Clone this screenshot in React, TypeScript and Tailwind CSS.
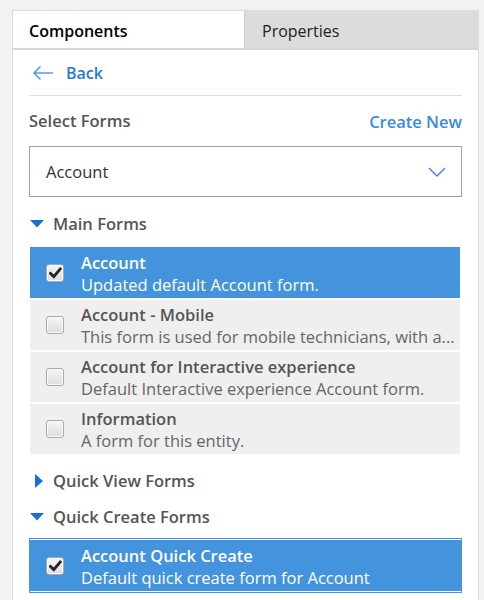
import React from "react";

const font = { fontFamily: '"Open Sans", "Noto Sans", sans-serif' };

function Check({ checked }: { checked: boolean }) {
  return (
    <div className="w-[18px] h-[18px] rounded-[3px] border border-[#a9a9a9] bg-gradient-to-b from-[#f4f4f4] to-[#dedede] flex items-center justify-center shrink-0 shadow-[inset_0_0_0_1px_#fafafa]">
      {checked && (
        <svg width="13" height="12" viewBox="0 0 13 12">
          <path d="M1.5 6.5 L4.8 9.6 L11.2 2" fill="none" stroke="#222" strokeWidth="2.8" strokeLinecap="square" />
        </svg>
      )}
    </div>
  );
}

function Row({ title, sub, selected, h = "h-[50px]" }: { title: string; sub: string; selected?: boolean; h?: string }) {
  return (
    <div className={`${h} flex items-center pl-[16px] pr-[6px] ${selected ? "bg-[#4394dc]" : "bg-[#efefef]"}`}>
      <Check checked={!!selected} />
      <div className="ml-[17px] flex flex-col min-w-0 pt-[2px]">
        <div className={`text-[16.5px] leading-[21px] font-semibold whitespace-nowrap ${selected ? "text-white" : "text-[#555]"}`}>{title}</div>
        <div className={`text-[16.5px] leading-[23px] whitespace-nowrap overflow-hidden ${selected ? "text-white" : "text-[#666]"}`}>{sub}</div>
      </div>
    </div>
  );
}

function Down() {
  return (
    <svg width="14" height="8" viewBox="0 0 14 8" className="shrink-0">
      <path d="M0 0 H14 L7 7.5 Z" fill="#1470d6" />
    </svg>
  );
}

function Right() {
  return (
    <svg width="9" height="14" viewBox="0 0 9 14" className="shrink-0">
      <path d="M0 0 V14 L8 7 Z" fill="#1470d6" />
    </svg>
  );
}

export default function App() {
  return (
    <div className="w-[484px] h-[600px] bg-[#f2f2f2] pt-[10px] pl-[12px] pr-[5px] overflow-hidden" style={font}>
      <div className="bg-white border border-[#dcdcdc] h-[600px]">
        <div className="flex h-[39px] border-b-2 border-[#d6d6d6]">
          <div className="w-[231px] pl-[16px] flex items-center pt-[2px] text-[16px] font-semibold text-black">Components</div>
          <div className="flex-1 bg-[#dcdcdc] border-l border-[#cacaca] pl-[17px] pt-[2px] flex items-center text-[16px] text-[#222]">Properties</div>
        </div>
        <div className="px-[16px]">
          <div className="h-[46px] pt-[1px] flex items-center border-b border-[#dedede]">
            <svg width="22" height="16" viewBox="0 0 22 16" className="ml-[3px]">
              <path d="M21 8 H2 M8.5 1.5 L2 8 L8.5 14.5" fill="none" stroke="#5a9be6" strokeWidth="1.6" />
            </svg>
            <span className="ml-[12px] text-[16px] font-semibold text-[#2a78d4]">Back</span>
          </div>
          <div className="h-[50px] flex items-center justify-between">
            <span className="text-[16.5px] font-semibold text-[#555]">Select Forms</span>
            <span className="text-[16.5px] font-semibold text-[#3b8ae0] pt-[2px]">Create New</span>
          </div>
          <div className="h-[51px] border border-[#a0a0a0] flex items-center justify-between pl-[16px] pr-[15px]">
            <span className="text-[16.5px] text-[#333] pt-[2px]">Account</span>
            <svg width="18" height="10" viewBox="0 0 18 10">
              <path d="M1 1 L9 9 L17 1" fill="none" stroke="#3d7ee6" strokeWidth="1.3" />
            </svg>
          </div>
          <div className="h-[50px] pt-[4px] flex items-center pl-[1px]">
            <Down />
            <span className="ml-[9px] text-[16.5px] font-semibold text-[#555]">Main Forms</span>
          </div>
          <div className="flex flex-col gap-[2px] ml-[1px] mr-[2px]">
            <Row h="h-[51px]" selected title="Account" sub="Updated default Account form." />
            <Row title="Account - Mobile" sub="This form is used for mobile technicians, with a..." />
            <Row title="Account for Interactive experience" sub="Default Interactive experience Account form." />
            <Row title="Information" sub="A form for this entity." />
          </div>
          <div className="pt-[9px]">
            <div className="h-[36px] flex items-center pl-[6px]">
              <Right />
              <span className="ml-[9px] text-[16.5px] font-semibold text-[#555]">Quick View Forms</span>
            </div>
            <div className="h-[36px] flex items-center pl-[1px]">
              <Down />
              <span className="ml-[9px] text-[16.5px] font-semibold text-[#555]">Quick Create Forms</span>
            </div>
          </div>
          <div className="mt-[3px] border border-[#4394dc]">
            <div className="border-y border-white">
              <Row h="h-[51px]" selected title="Account Quick Create" sub="Default quick create form for Account" />
            </div>
          </div>
        </div>
      </div>
    </div>
  );
}
